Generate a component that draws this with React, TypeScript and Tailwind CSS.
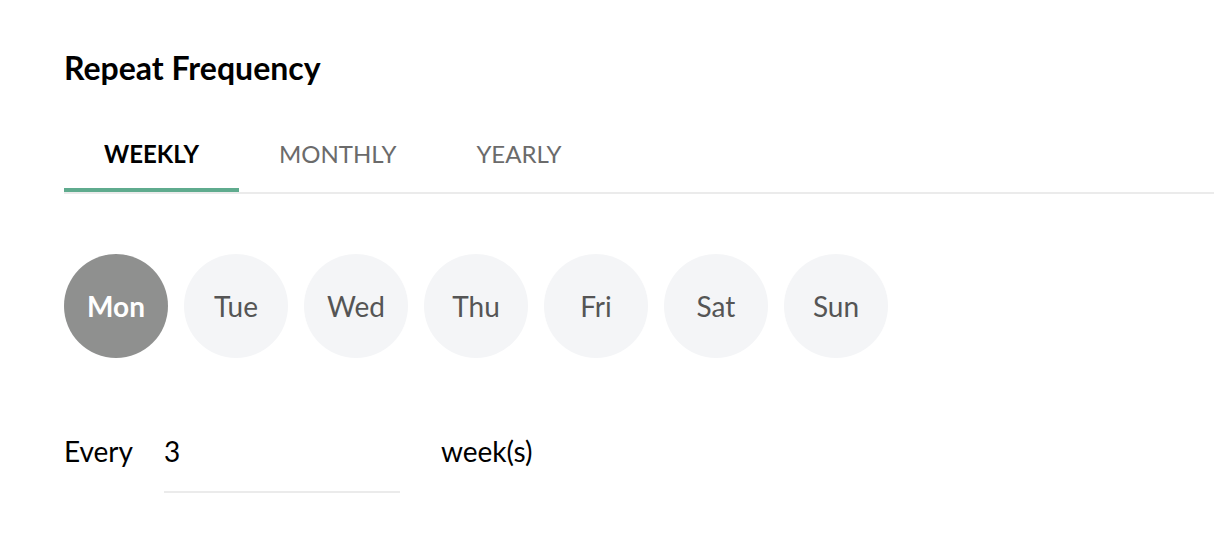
import React, { useState } from 'react';

const tabs = ['WEEKLY', 'MONTHLY', 'YEARLY'];
const days = ['Mon', 'Tue', 'Wed', 'Thu', 'Fri', 'Sat', 'Sun'];

const App: React.FC = () => {
  const [tab, setTab] = useState('WEEKLY');
  const [selected, setSelected] = useState<string[]>(['Mon']);
  const [every, setEvery] = useState('3');

  const toggleDay = (d: string) => {
    setSelected((prev) => (prev.includes(d) ? prev.filter((x) => x !== d) : [...prev, d]));
  };

  return (
    <div className="min-h-screen bg-white pl-16 pt-[49px] font-['Lato','Noto_Sans',sans-serif] text-black">
      <h2 className="text-[32px] font-bold leading-[38px]">Repeat Frequency</h2>

      <div className="mt-[33px] flex border-b-2 border-[#ebebeb]">
        {tabs.map((t) => (
          <button
            key={t}
            onClick={() => setTab(t)}
            className={
              t === tab
                ? 'flex h-[72px] items-center border-b-4 border-[#5fab8e] px-10 text-[24px] font-bold text-black'
                : 'flex h-[72px] items-center border-b-4 border-transparent px-10 text-[24px] text-[#6b6b6b]'
            }
          >
            {t}
          </button>
        ))}
      </div>

      <div className="mt-[60px] flex gap-4">
        {days.map((d) => {
          const on = selected.includes(d);
          return (
            <button
              key={d}
              onClick={() => toggleDay(d)}
              className={
                on
                  ? 'flex h-[104px] w-[104px] items-center justify-center rounded-full bg-[#8f908f] text-[28px] font-bold text-white'
                  : 'flex h-[104px] w-[104px] items-center justify-center rounded-full bg-[#f4f5f7] text-[28px] text-[#555555]'
              }
            >
              {d}
            </button>
          );
        })}
      </div>

      <div className="mt-[73px] flex items-start">
        <span className="w-[100px] text-[28px] leading-[40px]">Every</span>
        <div className="w-[236px] border-b-2 border-[#ebebeb] pb-[20px]">
          <input
            value={every}
            onChange={(e) => setEvery(e.target.value)}
            className="h-[40px] w-full bg-transparent text-[28px] leading-[40px] outline-none"
          />
        </div>
        <span className="ml-[41px] text-[28px] leading-[40px]">week(s)</span>
      </div>
    </div>
  );
};

export default App;
